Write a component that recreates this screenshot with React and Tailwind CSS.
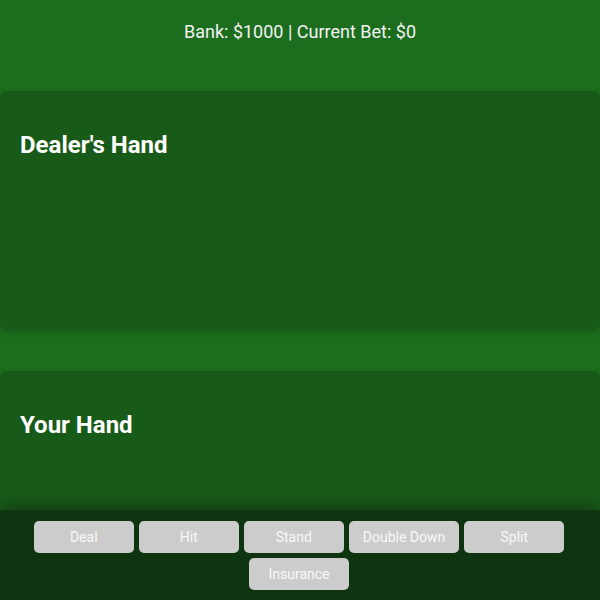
import React from "react";

const actions = ["Deal", "Hit", "Stand", "Double Down", "Split", "Insurance"];

const HandPanel = ({ title }) => (
  <div className="bg-[#185a18] rounded-[8px] min-h-[240px] px-[20px] pt-[40px] pb-[20px] shadow-[0_2px_6px_rgba(0,0,0,0.15)]">
    <h2 className="text-[24px] leading-[28px] font-bold text-white">{title}</h2>
  </div>
);

export default function App() {
  return (
    <div
      className="w-[600px] h-[600px] bg-[#1c6e1e] relative overflow-hidden text-white"
      style={{ fontFamily: "Roboto, 'Noto Sans', sans-serif" }}
    >
      <div className="pt-[18px] text-center text-[18px] leading-[27px] text-[#f2f2f2]">
        Bank: $1000 | Current Bet: $0
      </div>
      <div className="mt-[46px] flex flex-col gap-[40px]">
        <HandPanel title="Dealer's Hand" />
        <HandPanel title="Your Hand" />
      </div>
      <div className="absolute left-0 right-0 bottom-0 h-[90px] bg-[#0e3510] shadow-[0_-6px_14px_rgba(0,0,0,0.25)] pt-[11px] flex flex-wrap justify-center content-start gap-x-[5px] gap-y-[5px] pl-[29px] pr-[31px]">
        {actions.map((a) => (
          <button
            key={a}
            className="min-w-[100px] h-[32px] px-[14px] bg-[#cccccc] rounded-[5px] text-[14px] text-[#f8f8f8]"
          >
            {a}
          </button>
        ))}
      </div>
    </div>
  );
}
